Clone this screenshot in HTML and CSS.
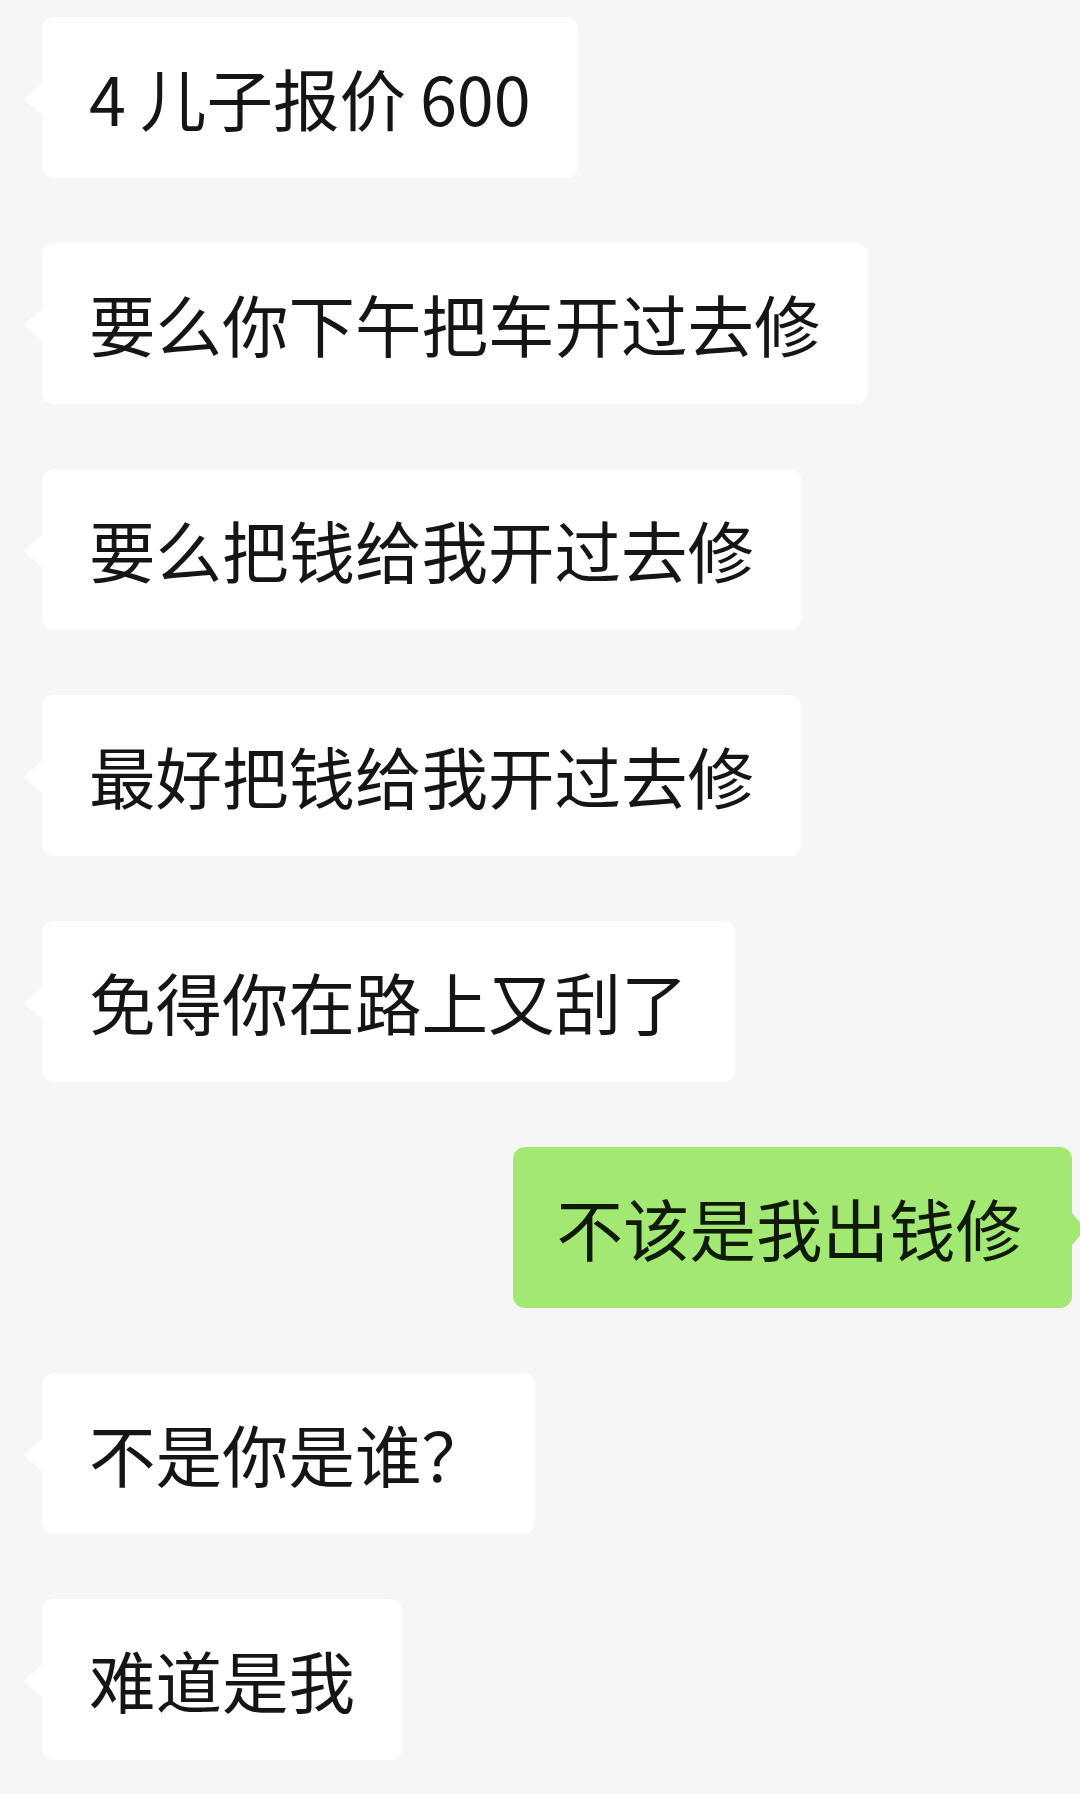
FILE: index.html
```html
<!DOCTYPE html>
<html lang="zh-CN">

<head>
    <meta charset="UTF-8">
    <meta name="viewport" content="width=device-width, initial-scale=1.0">
    <title>聊天记录</title>
    <link rel="stylesheet" href="styles.css">
</head>

<body>
    <div class="chat">
        <div class="msg msg-left">
            <div class="bubble"><span class="num-after">4</span>儿子报价<span class="num-before">600</span></div>
        </div>
        <div class="msg msg-left">
            <div class="bubble">要么你下午把车开过去修</div>
        </div>
        <div class="msg msg-left">
            <div class="bubble">要么把钱给我开过去修</div>
        </div>
        <div class="msg msg-left">
            <div class="bubble">最好把钱给我开过去修</div>
        </div>
        <div class="msg msg-left">
            <div class="bubble">免得你在路上又刮了</div>
        </div>
        <div class="msg msg-right">
            <div class="bubble bubble-me">不该是我出钱修</div>
        </div>
        <div class="msg msg-left">
            <div class="bubble">不是你是谁？</div>
        </div>
        <div class="msg msg-left">
            <div class="bubble">难道是我</div>
        </div>
    </div>
</body>

</html>
```

FILE: styles.css
```css
body {
    margin: 0;
    padding: 0;
    background-color: #f6f6f6;
    font-family: 'Noto Sans CJK SC', 'Noto Sans', sans-serif;
}

.chat {
    display: flex;
    flex-direction: column;
    gap: 65px;
    padding: 17px 8px 0 42px;
}

.msg {
    display: flex;
}

.msg-left {
    justify-content: flex-start;
}

.msg-right {
    justify-content: flex-end;
}

.bubble {
    position: relative;
    background-color: #ffffff;
    color: #151515;
    font-size: 66.5px;
    line-height: 67px;
    padding: 47px;
    border-radius: 12px;
    white-space: nowrap;
}

.bubble::before {
    content: '';
    position: absolute;
    top: 66px;
    left: -18px;
    border-top: 16px solid transparent;
    border-bottom: 16px solid transparent;
    border-right: 18px solid #ffffff;
}

.bubble-me {
    background-color: #a2e873;
    color: #0f1a08;
    padding: 47px 50px 47px 44px;
}

.bubble-me::before {
    left: auto;
    right: -14px;
    border-right: none;
    border-left: 14px solid #a2e873;
}

.num-after {
    margin-right: 14px;
}

.num-before {
    margin-left: 14px;
}
```
